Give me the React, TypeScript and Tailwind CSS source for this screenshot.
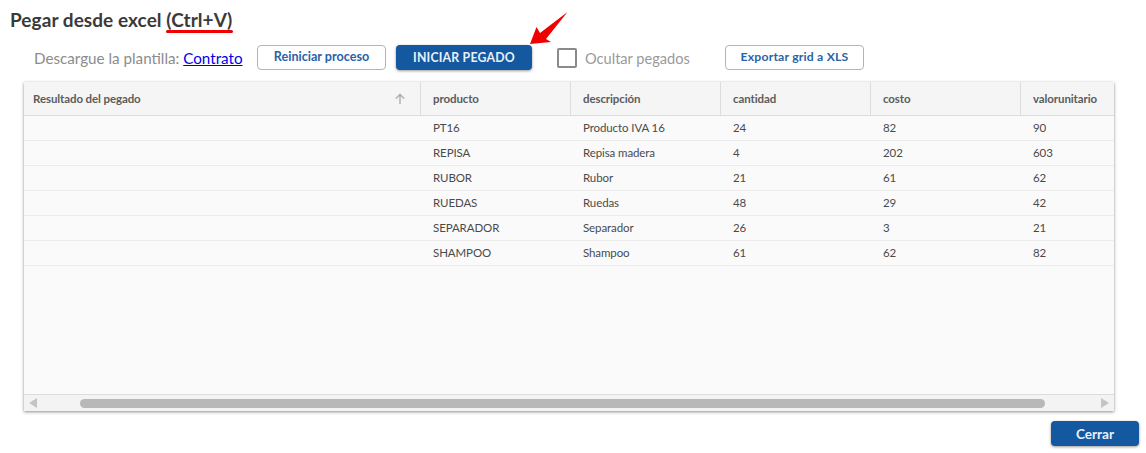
const font = "[font-family:Lato,'Noto_Sans',sans-serif]";

const columns = ["producto", "descripción", "cantidad", "costo", "valorunitario"];

const rows = [
  ["PT16", "Producto IVA 16", "24", "82", "90"],
  ["REPISA", "Repisa madera", "4", "202", "603"],
  ["RUBOR", "Rubor", "21", "61", "62"],
  ["RUEDAS", "Ruedas", "48", "29", "42"],
  ["SEPARADOR", "Separador", "26", "3", "21"],
  ["SHAMPOO", "Shampoo", "61", "62", "82"],
];

export default function App() {
  return (
    <div className={`relative w-[1146px] h-[453px] overflow-hidden bg-white ${font}`}>
      {/* Title */}
      <div className="h-[45px] pl-[10px] pt-[8px]">
        <h1 className="relative inline-block text-[19px] leading-[24px] font-bold text-[#3a3a3a] tracking-[0.06px]">
          Pegar desde excel (Ctrl+V)
          <span className="absolute right-[-1px] top-[22px] w-[67px] h-[3px] rounded-full bg-[#f00000]" />
        </h1>
      </div>

      {/* Toolbar */}
      <div className="flex items-center h-[25px] pl-[34px]">
        <span className="w-[208px] pt-[2px] text-[15.2px] text-[#8c8c8c] whitespace-nowrap">
          Descargue la plantilla: <a className="text-[#0000ee] underline">Contrato</a>
        </span>
        <button className="ml-[15px] w-[129px] h-[25px] rounded border border-[#b4b4b4] bg-white text-[12.6px] font-bold text-[#2a62a8]">
          Reiniciar proceso
        </button>
        <button className="relative ml-[10px] w-[136px] h-[25px] pt-[2px] rounded bg-[#14589f] text-[12.3px] font-bold tracking-[0.2px] text-[#e8f0f8] shadow-[0_1px_3px_rgba(0,0,0,0.4)]">
          INICIAR PEGADO
        </button>
        <span className="ml-[25px] w-[20px] h-[20px] border-2 border-[#8a8a8a] rounded-[2px]" />
        <span className="ml-[8px] w-[140px] pt-[2px] text-[14.6px] text-[#9a9a9a]">Ocultar pegados</span>
        <button className="w-[139px] h-[25px] rounded border border-[#b4b4b4] bg-white text-[12.2px] font-bold tracking-[0.2px] text-[#2a62a8]">
          Exportar grid a XLS
        </button>
      </div>

      {/* Arrow */}
      <svg className="absolute left-[528px] top-[10px]" width="42" height="36" viewBox="0 0 42 36">
        <path d="M2 34 L8.5 17 L12 23 L39.5 2 L18 29 L23 32 Z" fill="#f00000" />
      </svg>

      {/* Grid */}
      <div className="mt-[12px] ml-[24px] w-[1090px] h-[329px] flex flex-col overflow-hidden bg-[#fafafa] shadow-[0_1px_3px_rgba(0,0,0,0.45)] text-[11.5px] tracking-[-0.1px]">
        <div className="flex h-[34px] shrink-0 bg-[#f5f5f5] border-b border-[#dddddd] font-bold text-[#5c5c5c]">
          <div className="w-[397px] shrink-0 flex items-center justify-between pl-[9px] pr-[14px] border-r border-[#dddddd]">
            <span>Resultado del pegado</span>
            <svg width="12" height="12" viewBox="0 0 12 12" fill="none" stroke="#a8a8a8" strokeWidth="1.3">
              <path d="M6 11V1.5M1.8 5.6 6 1.5l4.2 4.1" />
            </svg>
          </div>
          {columns.map((col) => (
            <div key={col} className="w-[150px] shrink-0 flex items-center pl-[12px] border-r border-[#dddddd] last:border-r-0 whitespace-nowrap">
              {col}
            </div>
          ))}
        </div>

        <div className="flex-1 min-h-0 text-[#4a4a4a]">
          {rows.map((row) => (
            <div key={row[0]} className="flex h-[25px] items-center border-b border-[#ececec]">
              <div className="w-[396px] shrink-0" />
              {row.map((cell, i) => (
                <div key={i} className="w-[150px] shrink-0 pl-[13px] whitespace-nowrap">
                  {cell}
                </div>
              ))}
            </div>
          ))}
        </div>

        {/* Scrollbar */}
        <div className="flex items-center h-[17px] shrink-0 bg-[#f3f3f3] border-t border-[#dddddd] px-[5px]">
          <svg width="8" height="10" viewBox="0 0 8 10">
            <path d="M0 5 8 0v10z" fill="#c4c4c4" />
          </svg>
          <div className="ml-[43px] w-[965px] h-[9px] rounded-full bg-[#b8b8b8]" />
          <svg className="ml-auto" width="8" height="10" viewBox="0 0 8 10">
            <path d="M8 5 0 0v10z" fill="#c4c4c4" />
          </svg>
        </div>
      </div>

      {/* Footer */}
      <div className="flex justify-end mt-[10px] pr-[7px]">
        <button className="w-[88px] h-[25px] pt-[1px] rounded bg-[#14589f] text-[13.6px] font-bold text-[#e8f0f8] shadow-[0_1px_3px_rgba(0,0,0,0.4)]">
          Cerrar
        </button>
      </div>
    </div>
  );
}
